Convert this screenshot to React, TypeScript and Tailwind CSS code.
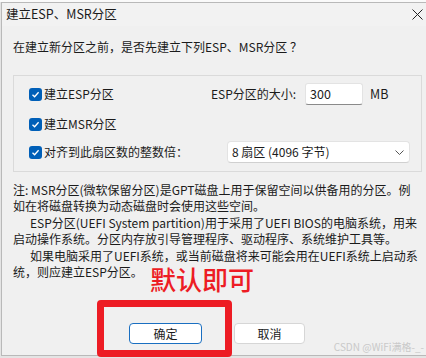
import React from "react";

const Check: React.FC = () => (
  <span className="w-[13px] h-[13px] rounded-[3px] bg-[#005fb8] flex items-center justify-center shrink-0">
    <svg width="9" height="9" viewBox="0 0 9 9">
      <polyline points="1.5,4.8 3.6,6.8 7.6,2.2" fill="none" stroke="white" strokeWidth="1.3" />
    </svg>
  </span>
);

const notes = [
  { text: "注: MSR分区(微软保留分区)是GPT磁盘上用于保留空间以供备用的分区。例", indent: false },
  { text: "如在将磁盘转换为动态磁盘时会使用这些空间。", indent: false },
  { text: "ESP分区(UEFI System partition)用于采用了UEFI BIOS的电脑系统，用来", indent: true },
  { text: "启动操作系统。分区内存放引导管理程序、驱动程序、系统维护工具等。", indent: false },
  { text: "如果电脑采用了UEFI系统，或当前磁盘将来可能会用在UEFI系统上启动系", indent: true },
  { text: "统，则应建立ESP分区。", indent: false },
];

const App: React.FC = () => {
  return (
    <div className="w-[426px] h-[358px] overflow-hidden relative bg-[#e4e4e4] text-[12px] text-[#1b1b1b] font-['Noto_Sans_CJK_SC','Noto_Sans',sans-serif]">
      <div className="h-[2px] bg-[#fafafa]" />
      <div className="ml-[1px] h-[354px] border-l border-t border-b border-[#b9b9b9] bg-[#f0f0f0] flex flex-col">
        {/* title bar */}
        <div className="h-[23px] flex items-center justify-between pl-[4px] pr-[3px] bg-[#f2f2f2]">
          <span className="text-[12.5px] leading-none">建立ESP、MSR分区</span>
          <svg width="11" height="11" viewBox="0 0 11 11">
            <path d="M0.5 0.5 L10.5 10.5 M10.5 0.5 L0.5 10.5" stroke="#222" strokeWidth="1" />
          </svg>
        </div>

        <div className="pl-[11px] flex flex-col">
          <div className="mt-[12px] h-[17px] leading-[17px] whitespace-nowrap">
            在建立新分区之前，是否先建立下列ESP、MSR分区 ？
          </div>

          {/* group box */}
          <div className="mt-[20px] w-[409px] h-[97px] border border-[#dadada] pt-[7px] pl-[15px] flex flex-col">
            <div className="h-[22px] flex items-center">
              <div className="w-[182px] flex items-center">
                <Check />
                <span className="ml-[2px]">建立ESP分区</span>
              </div>
              <span className="w-[94px]">ESP分区的大小:</span>
              <div className="w-[58px] h-[22px] bg-white border border-[#e3e3e3] border-b-[#8a8a8a] rounded-[3px] flex items-center pl-[4px] text-[12.5px]">
                300
              </div>
              <span className="ml-[7px] text-[12.5px]">MB</span>
            </div>
            <div className="mt-[8px] h-[22px] flex items-center">
              <Check />
              <span className="ml-[2px]">建立MSR分区</span>
            </div>
            <div className="mt-[6px] h-[22px] flex items-center">
              <div className="w-[198px] flex items-center">
                <Check />
                <span className="ml-[2px]">对齐到此扇区数的整数倍：</span>
              </div>
              <div className="w-[183px] h-[22px] bg-white border border-[#e3e3e3] border-b-[#d0d0d0] rounded-[4px] flex items-center justify-between pl-[4px] pr-[5px]">
                <span>8 扇区 (4096 字节)</span>
                <svg width="9" height="5" viewBox="0 0 9 5">
                  <path d="M0.5 0.5 L4.5 4.5 L8.5 0.5" fill="none" stroke="#555" strokeWidth="1" />
                </svg>
              </div>
            </div>
          </div>

          {/* notes */}
          <div className="mt-[10px] flex flex-col">
            {notes.map((n, i) => (
              <div key={i} className={`h-[16.4px] leading-[16.4px] whitespace-nowrap ${n.indent ? "pl-[17px]" : ""}`}>
                {n.text}
              </div>
            ))}
          </div>

          {/* buttons */}
          <div className="mt-[43px] flex items-center">
            <button className="ml-[116px] w-[73px] h-[21px] bg-white border border-[#1a6fc1] rounded-[4px] text-[12px] flex items-center justify-center">
              确定
            </button>
            <button className="ml-[32px] w-[71px] h-[21px] bg-white border border-[#d6d6d6] rounded-[4px] text-[12px] flex items-center justify-center">
              取消
            </button>
          </div>
        </div>
      </div>

      {/* annotations */}
      <div className="absolute left-[150px] top-[264px] text-[26px] leading-[30px] font-medium text-[#ed1c24]">
        默认即可
      </div>
      <div className="absolute left-[97px] top-[300px] w-[135px] h-[57px] border-[7px] border-[#ed1c24] rounded-[4px]" />
      <div className="absolute right-[2px] top-[340px] text-[10px] leading-[13px] text-[#c9c9c9] whitespace-nowrap">
        CSDN @WiFi满格-_-
      </div>
    </div>
  );
};

export default App;
